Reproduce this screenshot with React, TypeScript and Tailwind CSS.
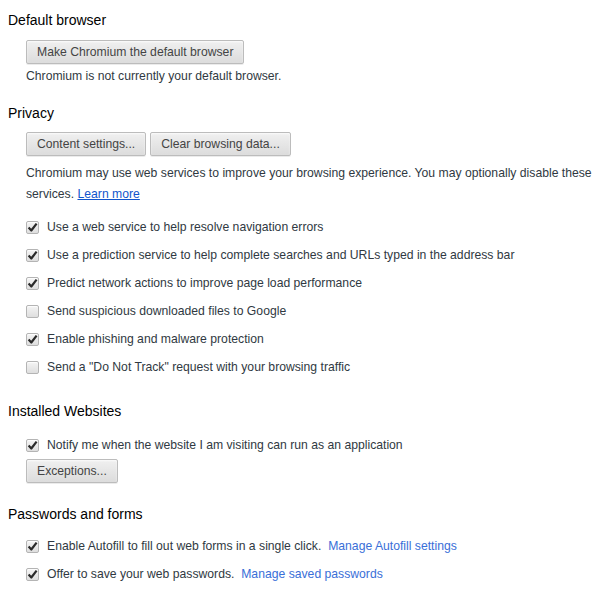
import React from "react";

function Button({ children }: { children: React.ReactNode }) {
  return (
    <button
      type="button"
      className="h-[24px] px-[10px] rounded-[2px] border border-[#bcbcbc] bg-gradient-to-b from-[#f0f0f0] to-[#dcdcdc] text-[12.2px] leading-[20px] text-[#444] shadow-[0_1px_0_rgba(0,0,0,0.08),inset_0_1px_2px_rgba(255,255,255,0.75)]"
    >
      {children}
    </button>
  );
}

function Checkbox({ checked }: { checked: boolean }) {
  return (
    <span className="flex h-[13px] w-[13px] shrink-0 items-center justify-center rounded-[2px] border border-[#b4b4b4] bg-gradient-to-b from-[#f4f4f4] to-[#dedede] shadow-[inset_0_1px_1px_rgba(255,255,255,0.8)]">
      {checked && (
        <svg width="11" height="11" viewBox="0 0 11 11">
          <path d="M1.6 5.6 L4.3 8.5 L9.6 1.6" fill="none" stroke="#2a2a2a" strokeWidth="2.2" strokeLinejoin="round" />
        </svg>
      )}
    </span>
  );
}

function Row({ checked, children }: { checked: boolean; children: React.ReactNode }) {
  return (
    <div className="flex h-[28px] items-center gap-[8px]">
      <Checkbox checked={checked} />
      <span>{children}</span>
    </div>
  );
}

function Heading({ children, className = "" }: { children: React.ReactNode; className?: string }) {
  return <h3 className={`text-[14px] leading-[20px] text-black ${className}`}>{children}</h3>;
}

export default function App() {
  return (
    <div className="min-h-[601px] w-[612px] bg-white px-[8px] pt-[10px] text-[12.2px] leading-[20px] text-[#303942] [font-family:'Liberation_Sans',Arial,sans-serif]">
      <Heading>Default browser</Heading>
      <div className="ml-[18px]">
        <div className="mt-[10px]">
          <Button>Make Chromium the default browser</Button>
        </div>
        <div className="mt-[2px]">Chromium is not currently your default browser.</div>
      </div>

      <Heading className="mt-[17px]">Privacy</Heading>
      <div className="ml-[18px]">
        <div className="mt-[9px] flex gap-[4px]">
          <Button>Content settings...</Button>
          <Button>Clear browsing data...</Button>
        </div>
        <p className="mt-[7px] leading-[21px]">
          Chromium may use web services to improve your browsing experience. You may optionally disable these
          services. <a className="text-[#15c] underline">Learn more</a>
        </p>
        <div className="mt-[8px]">
          <Row checked>Use a web service to help resolve navigation errors</Row>
          <Row checked>Use a prediction service to help complete searches and URLs typed in the address bar</Row>
          <Row checked>Predict network actions to improve page load performance</Row>
          <Row checked={false}>Send suspicious downloaded files to Google</Row>
          <Row checked>Enable phishing and malware protection</Row>
          <Row checked={false}>Send a "Do Not Track" request with your browsing traffic</Row>
        </div>
      </div>

      <Heading className="mt-[20px]">Installed Websites</Heading>
      <div className="ml-[18px]">
        <div className="mt-[10px]">
          <Row checked>Notify me when the website I am visiting can run as an application</Row>
        </div>
        <div>
          <Button>Exceptions...</Button>
        </div>
      </div>

      <Heading className="mt-[21px]">Passwords and forms</Heading>
      <div className="ml-[18px] mt-[8px]">
        <Row checked>
          Enable Autofill to fill out web forms in a single click.&nbsp;{" "}
          <a className="text-[#3a6fd8]">Manage Autofill settings</a>
        </Row>
        <Row checked>
          Offer to save your web passwords.&nbsp;{" "}
          <a className="text-[#3a6fd8]">Manage saved passwords</a>
        </Row>
      </div>
    </div>
  );
}
